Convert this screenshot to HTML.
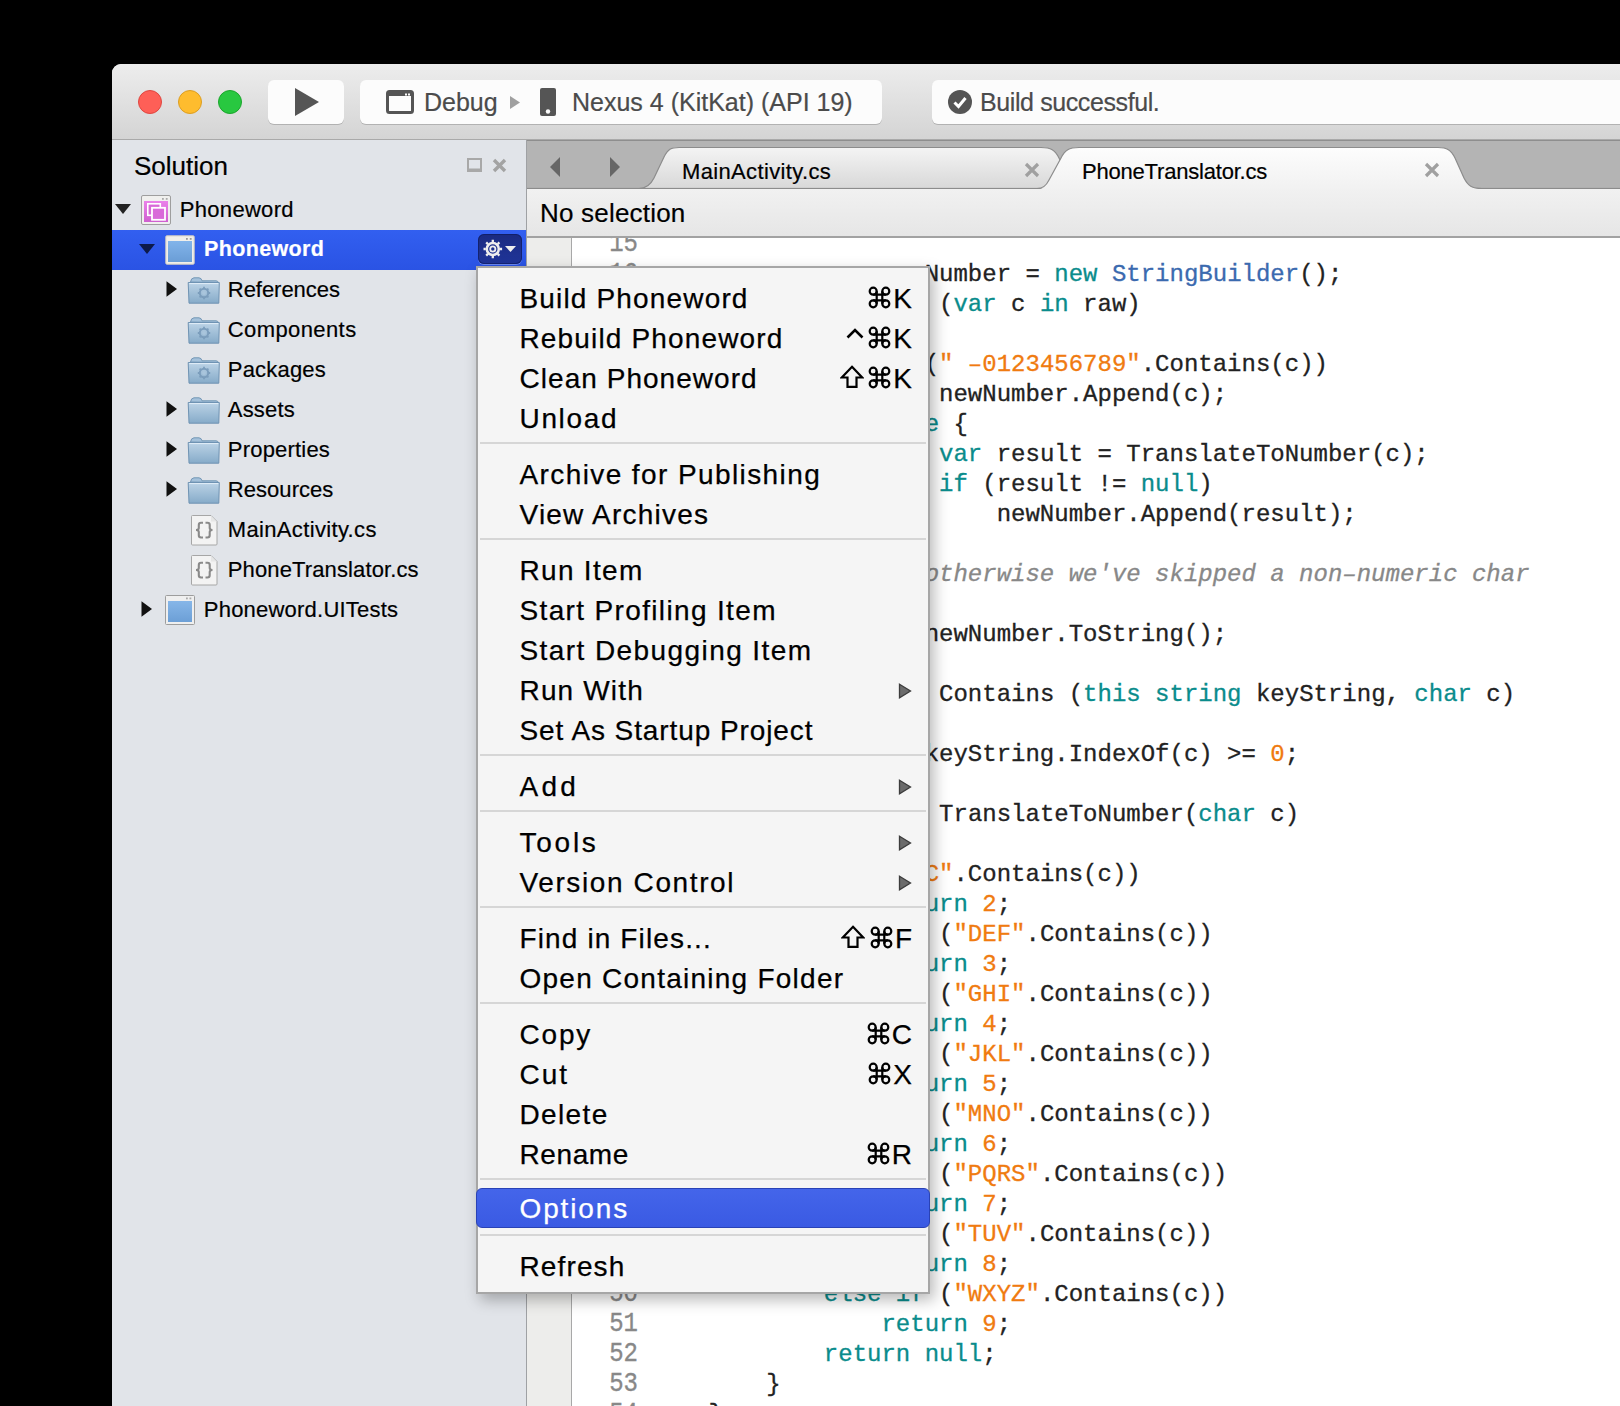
<!DOCTYPE html>
<html><head><meta charset="utf-8">
<style>
html,body{margin:0;padding:0;}
body{width:1620px;height:1406px;overflow:hidden;background:#000;position:relative;font-family:"Liberation Sans",sans-serif;}
.a{position:absolute;}
#win{left:112px;top:64px;width:1508px;height:1342px;background:#e1e4e9;border-top-left-radius:9px;overflow:hidden;}
#toolbar{left:112px;top:64px;width:1508px;height:75px;background:linear-gradient(#ededed,#d4d4d4);border-top-left-radius:9px;border-bottom:1px solid #a9a9a9;}
.tl{width:22px;height:22px;border-radius:50%;top:90px;}
.btn{background:#fcfcfc;border-radius:6px;box-shadow:0 1px 0.5px rgba(0,0,0,0.18);top:80px;height:44px;}
.tbtext{font-size:25px;color:#4b4b4b;top:87px;line-height:30px;white-space:nowrap;-webkit-text-stroke:0.2px currentColor;}
#sidebar{left:112px;top:140px;width:414px;height:1266px;background:#e1e4e9;}
#sbborder{left:526px;top:140px;width:2px;height:1266px;background:#9fa1a4;}
.tree{font-size:21.5px;color:#000;line-height:26px;white-space:nowrap;letter-spacing:0.35px;-webkit-text-stroke:0.2px currentColor;}
#tabbar{left:527px;top:140px;width:1093px;height:48px;background:#b4b4b4;border-top:1px solid #8e8e8e;}
#nosel{left:527px;top:189px;width:1093px;height:47px;background:linear-gradient(#f1f1f1,#e6e6e6);border-bottom:2px solid #a2a2a2;}
#gutter{left:527px;top:238px;width:44px;height:1168px;background:#ededeb;border-right:1px solid #a8a8a8;}
#code{left:572px;top:238px;width:1048px;height:1168px;background:#fff;overflow:hidden;}
#codein{position:absolute;left:0;top:-8.5px;}
.cl{height:30px;line-height:30px;white-space:pre;font-family:"Liberation Mono",monospace;font-size:24px;color:#222;position:relative;-webkit-text-stroke:0.3px currentColor;}
.lnum{position:absolute;left:37px;width:29px;text-align:right;color:#888;transform:scaleY(1.12);transform-origin:0 22px;}
.ctext{position:absolute;left:79px;}
.k{color:#0a8c8c;}
.t{color:#3b6aaf;}
.s{color:#f07b10;}
.n{color:#f07b10;}
.c{color:#888;font-style:italic;}
#menu{left:476px;top:266px;width:450px;background:#f5f5f5;border:2px solid #a6a6a6;box-shadow:4px 6px 14px rgba(0,0,0,0.28);padding:10px 0 6px 0;}
.mi{height:40px;position:relative;font-size:28px;letter-spacing:1px;color:#000;line-height:40px;white-space:nowrap;}
.ml{position:absolute;left:41.5px;top:1px;-webkit-text-stroke:0.25px #000;}
.msc{position:absolute;right:16px;top:1px;letter-spacing:0;-webkit-text-stroke:0.25px #000;}
.cmd{display:inline-block;vertical-align:top;margin-top:7px;margin-right:2px;}
.marr{position:absolute;right:16px;top:13px;width:14px;height:16px;}
.msep{height:16px;position:relative;}
.msep div{position:absolute;left:2px;right:2px;top:4px;height:2px;background:#d6d6d6;}
.mi.sel{color:#fff;}
.mi.sel::before{content:"";position:absolute;left:-2px;right:-2px;top:-2px;height:40px;border-radius:6px;background:linear-gradient(#4465ea,#3a5ae3);border:1.5px solid #2942b6;box-sizing:border-box;}
.mi.sel .ml{z-index:1;top:-1px;-webkit-text-stroke:0.25px #fff;}
</style></head><body>
<div id="win" class="a"></div>
<div id="toolbar" class="a"></div>
<div class="a tl" style="left:138px;background:#fe5f57;border:1px solid #df4640;"></div>
<div class="a tl" style="left:178px;background:#febc2e;border:1px solid #dc9e22;"></div>
<div class="a tl" style="left:218px;background:#28c840;border:1px solid #1ba62c;"></div>
<div class="a btn" style="left:268px;width:76px;"></div>
<svg class="a" style="left:294px;top:87px;" width="26" height="30"><path d="M1 1 L25 15 L1 29 Z" fill="#555"/></svg>
<div class="a btn" style="left:360px;width:522px;"></div>
<svg class="a" style="left:386px;top:90px;" width="28" height="24"><rect x="1.5" y="1.5" width="25" height="21" rx="2" fill="none" stroke="#555" stroke-width="3"/><rect x="3" y="3" width="22" height="3" fill="#555"/><rect x="19" y="3.5" width="2" height="2" fill="#fcfcfc"/><rect x="22" y="3.5" width="2" height="2" fill="#fcfcfc"/></svg>
<div class="a tbtext" style="left:424px;">Debug</div>
<svg class="a" style="left:510px;top:96px;" width="11" height="13"><path d="M0 0 L10 6.5 L0 13 Z" fill="#a0a0a0"/></svg>
<svg class="a" style="left:540px;top:88px;" width="17" height="28"><rect x="0" y="0" width="16" height="28" rx="2" fill="#555"/><circle cx="8" cy="23.5" r="2.2" fill="#fcfcfc"/></svg>
<div class="a tbtext" style="left:572px;">Nexus 4 (KitKat) (API 19)</div>
<div class="a btn" style="left:932px;width:720px;"></div>
<svg class="a" style="left:948px;top:90px;" width="24" height="24"><circle cx="12" cy="12" r="12" fill="#555"/><path d="M6.5 12.5 L10.5 16.5 L17.5 8" fill="none" stroke="#fff" stroke-width="3"/></svg>
<div class="a tbtext" style="left:980px;letter-spacing:-0.4px;">Build successful.</div>

<div id="sidebar" class="a"></div>
<div id="sbborder" class="a"></div>
<div class="a" style="left:134px;top:150px;font-size:26px;color:#000;line-height:32px;-webkit-text-stroke:0.2px #000;">Solution</div>
<svg class="a" style="left:467px;top:158px;" width="15" height="14"><rect x="1" y="1" width="13" height="12" fill="none" stroke="#a8a8a8" stroke-width="2"/><rect x="1" y="10.5" width="13" height="3" fill="#a8a8a8"/></svg>
<svg class="a" style="left:492px;top:158px;" width="15" height="15"><path d="M2 2 L13 13 M13 2 L2 13" stroke="#a3a3a3" stroke-width="3.4"/></svg>

<!-- tree -->
<svg class="a" style="left:115px;top:204px;" width="16" height="10"><path d="M0 0 L16 0 L8 10 Z" fill="#222"/></svg>
<svg class="a" style="left:141px;top:195px;" width="30" height="30"><defs><linearGradient id="pk" x1="0" y1="0" x2="0" y2="1"><stop offset="0" stop-color="#ea82ea"/><stop offset="1" stop-color="#cf5fcf"/></linearGradient></defs><rect x="0.5" y="0.5" width="29" height="29" rx="1.5" fill="#f0f0ee" stroke="#9e9e9e"/><rect x="3" y="6" width="24" height="21" fill="url(#pk)"/><rect x="6.8" y="8.8" width="12.5" height="11.5" fill="#d86ad8" stroke="#fff" stroke-width="1.6"/><rect x="11" y="12.8" width="13" height="12" fill="#d96ad9" stroke="#fff" stroke-width="1.8"/><rect x="21" y="3" width="1.8" height="1.8" fill="#aaa"/><rect x="24.8" y="3" width="1.8" height="1.8" fill="#aaa"/></svg>
<div class="a tree" style="left:179.8px;top:196.5px;font-size:22px;letter-spacing:0.3px">Phoneword</div>

<div class="a" style="left:112px;top:230px;width:414px;height:40px;background:linear-gradient(#325ff0,#2a53e4);"></div>
<svg class="a" style="left:139px;top:244px;" width="16" height="10"><path d="M0 0 L16 0 L8 10 Z" fill="#0d1a4a"/></svg>
<svg class="a" style="left:165px;top:235px;" width="31" height="31"><rect x="0.8" y="0.8" width="28.4" height="28.4" rx="1" fill="#f1efea" stroke="#cfcac0" stroke-width="1"/><rect x="3" y="6" width="24" height="21" fill="url(#pb)"/><rect x="21" y="3" width="1.8" height="1.8" fill="#999"/><rect x="24.8" y="3" width="1.8" height="1.8" fill="#999"/><defs><linearGradient id="pb" x1="0" y1="0" x2="0" y2="1"><stop offset="0" stop-color="#82b4ea"/><stop offset="1" stop-color="#6a9dd6"/></linearGradient></defs></svg>
<div class="a tree" style="left:204px;top:236px;color:#fff;font-weight:bold;">Phoneword</div>
<div class="a" style="left:478px;top:234px;width:44px;height:30px;border-radius:6px;background:linear-gradient(#1a2a80,#20359a);box-shadow:inset 0 0 0 1px rgba(10,20,80,0.5), 0 1px 0 rgba(160,180,255,0.55);"></div>
<svg class="a" style="left:483px;top:238px;" width="36" height="22"><g transform="translate(9.8,11)"><circle r="6" fill="none" stroke="#eee" stroke-width="2.5"/><circle r="2.6" fill="none" stroke="#eee" stroke-width="1.8"/><g stroke="#eee" stroke-width="2.3"><path d="M0 -9.3 V-7 M0 7 V9.3 M-9.3 0 H-7 M7 0 H9.3 M-6.6 -6.6 L-4.9 -4.9 M4.9 4.9 L6.6 6.6 M-6.6 6.6 L-4.9 4.9 M4.9 -4.9 L6.6 -6.6"/></g></g><path d="M22 8 L33 8 L27.5 14 Z" fill="#eee"/></svg>

<svg class="a" style="left:166px;top:281px;" width="12" height="16"><path d="M0.5 0.2 L11 8 L0.5 15.8 Z" fill="#111"/></svg>
<svg class="a" style="left:187px;top:277px;" width="34" height="28"><defs><linearGradient id="fg277" x1="0" y1="0" x2="0" y2="1"><stop offset="0" stop-color="#bcd3e6"/><stop offset="1" stop-color="#86abc9"/></linearGradient></defs><path d="M3.5 5 Q4 1 7 0.8 L12 0.8 Q14.5 1 15 3.8 L29 3.8 Q31 4 31.5 5.5 Z" fill="#a4c1da" stroke="#7497b6" stroke-width="1"/><path d="M1.2 5.5 L32.3 5.5 L31.8 26.2 L2 26.2 Z" fill="url(#fg277)" stroke="#6f93b3" stroke-width="1"/><path d="M2.2 6.6 L31.3 6.6" stroke="#e2eef8" stroke-width="1"/><g transform="translate(17,16)"><circle r="4.2" fill="none" stroke="#7b9dbc" stroke-width="2"/><circle r="2" fill="#a9c5dc"/><g stroke="#7b9dbc" stroke-width="1.8"><path d="M0 -6.2 V-4 M0 4 V6.2 M-6.2 0 H-4 M4 0 H6.2 M-4.4 -4.4 L-2.9 -2.9 M2.9 2.9 L4.4 4.4 M-4.4 4.4 L-2.9 2.9 M2.9 -2.9 L4.4 -4.4"/></g></g></svg>
<div class="a tree" style="left:227.8px;top:276.5px;font-size:22px;letter-spacing:-0.04px">References</div>
<svg class="a" style="left:187px;top:317px;" width="34" height="28"><defs><linearGradient id="fg317" x1="0" y1="0" x2="0" y2="1"><stop offset="0" stop-color="#bcd3e6"/><stop offset="1" stop-color="#86abc9"/></linearGradient></defs><path d="M3.5 5 Q4 1 7 0.8 L12 0.8 Q14.5 1 15 3.8 L29 3.8 Q31 4 31.5 5.5 Z" fill="#a4c1da" stroke="#7497b6" stroke-width="1"/><path d="M1.2 5.5 L32.3 5.5 L31.8 26.2 L2 26.2 Z" fill="url(#fg317)" stroke="#6f93b3" stroke-width="1"/><path d="M2.2 6.6 L31.3 6.6" stroke="#e2eef8" stroke-width="1"/><g transform="translate(17,16)"><circle r="4.2" fill="none" stroke="#7b9dbc" stroke-width="2"/><circle r="2" fill="#a9c5dc"/><g stroke="#7b9dbc" stroke-width="1.8"><path d="M0 -6.2 V-4 M0 4 V6.2 M-6.2 0 H-4 M4 0 H6.2 M-4.4 -4.4 L-2.9 -2.9 M2.9 2.9 L4.4 4.4 M-4.4 4.4 L-2.9 2.9 M2.9 -2.9 L4.4 -4.4"/></g></g></svg>
<div class="a tree" style="left:227.8px;top:316.5px;font-size:22px;letter-spacing:0.40px">Components</div>
<svg class="a" style="left:187px;top:357px;" width="34" height="28"><defs><linearGradient id="fg357" x1="0" y1="0" x2="0" y2="1"><stop offset="0" stop-color="#bcd3e6"/><stop offset="1" stop-color="#86abc9"/></linearGradient></defs><path d="M3.5 5 Q4 1 7 0.8 L12 0.8 Q14.5 1 15 3.8 L29 3.8 Q31 4 31.5 5.5 Z" fill="#a4c1da" stroke="#7497b6" stroke-width="1"/><path d="M1.2 5.5 L32.3 5.5 L31.8 26.2 L2 26.2 Z" fill="url(#fg357)" stroke="#6f93b3" stroke-width="1"/><path d="M2.2 6.6 L31.3 6.6" stroke="#e2eef8" stroke-width="1"/><g transform="translate(17,16)"><circle r="4.2" fill="none" stroke="#7b9dbc" stroke-width="2"/><circle r="2" fill="#a9c5dc"/><g stroke="#7b9dbc" stroke-width="1.8"><path d="M0 -6.2 V-4 M0 4 V6.2 M-6.2 0 H-4 M4 0 H6.2 M-4.4 -4.4 L-2.9 -2.9 M2.9 2.9 L4.4 4.4 M-4.4 4.4 L-2.9 2.9 M2.9 -2.9 L4.4 -4.4"/></g></g></svg>
<div class="a tree" style="left:227.8px;top:356.5px;font-size:22px;letter-spacing:0.19px">Packages</div>
<svg class="a" style="left:166px;top:401px;" width="12" height="16"><path d="M0.5 0.2 L11 8 L0.5 15.8 Z" fill="#111"/></svg>
<svg class="a" style="left:187px;top:397px;" width="34" height="28"><defs><linearGradient id="fg397" x1="0" y1="0" x2="0" y2="1"><stop offset="0" stop-color="#bcd3e6"/><stop offset="1" stop-color="#86abc9"/></linearGradient></defs><path d="M3.5 5 Q4 1 7 0.8 L12 0.8 Q14.5 1 15 3.8 L29 3.8 Q31 4 31.5 5.5 Z" fill="#a4c1da" stroke="#7497b6" stroke-width="1"/><path d="M1.2 5.5 L32.3 5.5 L31.8 26.2 L2 26.2 Z" fill="url(#fg397)" stroke="#6f93b3" stroke-width="1"/><path d="M2.2 6.6 L31.3 6.6" stroke="#e2eef8" stroke-width="1"/></svg>
<div class="a tree" style="left:227.8px;top:396.5px;font-size:22px;letter-spacing:0.18px">Assets</div>
<svg class="a" style="left:166px;top:441px;" width="12" height="16"><path d="M0.5 0.2 L11 8 L0.5 15.8 Z" fill="#111"/></svg>
<svg class="a" style="left:187px;top:437px;" width="34" height="28"><defs><linearGradient id="fg437" x1="0" y1="0" x2="0" y2="1"><stop offset="0" stop-color="#bcd3e6"/><stop offset="1" stop-color="#86abc9"/></linearGradient></defs><path d="M3.5 5 Q4 1 7 0.8 L12 0.8 Q14.5 1 15 3.8 L29 3.8 Q31 4 31.5 5.5 Z" fill="#a4c1da" stroke="#7497b6" stroke-width="1"/><path d="M1.2 5.5 L32.3 5.5 L31.8 26.2 L2 26.2 Z" fill="url(#fg437)" stroke="#6f93b3" stroke-width="1"/><path d="M2.2 6.6 L31.3 6.6" stroke="#e2eef8" stroke-width="1"/></svg>
<div class="a tree" style="left:227.8px;top:436.5px;font-size:22px;letter-spacing:0.20px">Properties</div>
<svg class="a" style="left:166px;top:481px;" width="12" height="16"><path d="M0.5 0.2 L11 8 L0.5 15.8 Z" fill="#111"/></svg>
<svg class="a" style="left:187px;top:477px;" width="34" height="28"><defs><linearGradient id="fg477" x1="0" y1="0" x2="0" y2="1"><stop offset="0" stop-color="#bcd3e6"/><stop offset="1" stop-color="#86abc9"/></linearGradient></defs><path d="M3.5 5 Q4 1 7 0.8 L12 0.8 Q14.5 1 15 3.8 L29 3.8 Q31 4 31.5 5.5 Z" fill="#a4c1da" stroke="#7497b6" stroke-width="1"/><path d="M1.2 5.5 L32.3 5.5 L31.8 26.2 L2 26.2 Z" fill="url(#fg477)" stroke="#6f93b3" stroke-width="1"/><path d="M2.2 6.6 L31.3 6.6" stroke="#e2eef8" stroke-width="1"/></svg>
<div class="a tree" style="left:227.8px;top:476.5px;font-size:22px;letter-spacing:0.05px">Resources</div>
<svg class="a" style="left:191px;top:515px;" width="27" height="31"><path d="M1.5 0.5 L20 0.5 L26 6.5 L26 29 Q26 30 25 30 L1.5 30 Q0.5 30 0.5 29 L0.5 1.5 Q0.5 0.5 1.5 0.5 Z" fill="#f3f3f3" stroke="#a6a6a6" stroke-width="1"/><path d="M20 0.8 L20 6.5 L25.7 6.5 Z" fill="#e6e6e6"/><g fill="none" stroke="#8a8a8a" stroke-width="2.1"><path d="M12 7.8 L10 7.8 Q7.8 7.8 7.8 10 L7.8 13 Q7.8 15 5 15 Q7.8 15 7.8 17 L7.8 20.3 Q7.8 22.5 10 22.5 L12 22.5"/><path d="M14.5 7.8 L16.5 7.8 Q18.7 7.8 18.7 10 L18.7 13 Q18.7 15 21.5 15 Q18.7 15 18.7 17 L18.7 20.3 Q18.7 22.5 16.5 22.5 L14.5 22.5"/></g></svg>
<div class="a tree" style="left:227.8px;top:516.5px;font-size:22px;letter-spacing:0.34px">MainActivity.cs</div>
<svg class="a" style="left:191px;top:555px;" width="27" height="31"><path d="M1.5 0.5 L20 0.5 L26 6.5 L26 29 Q26 30 25 30 L1.5 30 Q0.5 30 0.5 29 L0.5 1.5 Q0.5 0.5 1.5 0.5 Z" fill="#f3f3f3" stroke="#a6a6a6" stroke-width="1"/><path d="M20 0.8 L20 6.5 L25.7 6.5 Z" fill="#e6e6e6"/><g fill="none" stroke="#8a8a8a" stroke-width="2.1"><path d="M12 7.8 L10 7.8 Q7.8 7.8 7.8 10 L7.8 13 Q7.8 15 5 15 Q7.8 15 7.8 17 L7.8 20.3 Q7.8 22.5 10 22.5 L12 22.5"/><path d="M14.5 7.8 L16.5 7.8 Q18.7 7.8 18.7 10 L18.7 13 Q18.7 15 21.5 15 Q18.7 15 18.7 17 L18.7 20.3 Q18.7 22.5 16.5 22.5 L14.5 22.5"/></g></svg>
<div class="a tree" style="left:227.8px;top:556.5px;font-size:22px;letter-spacing:0.12px">PhoneTranslator.cs</div>
<svg class="a" style="left:141px;top:601px;" width="12" height="16"><path d="M0.5 0.2 L11 8 L0.5 15.8 Z" fill="#111"/></svg>
<svg class="a" style="left:165px;top:595px;" width="31" height="31"><defs><linearGradient id="pj595" x1="0" y1="0" x2="0" y2="1"><stop offset="0" stop-color="#86b6e8"/><stop offset="1" stop-color="#6c9fd6"/></linearGradient></defs><rect x="0.5" y="0.5" width="29" height="29" rx="1" fill="#efefef" stroke="#9d9d9d"/><rect x="3" y="6" width="24" height="21" fill="url(#pj595)"/><rect x="21" y="2.5" width="1.8" height="1.8" fill="#aaa"/><rect x="24.5" y="2.5" width="1.8" height="1.8" fill="#aaa"/></svg>
<div class="a tree" style="left:203.8px;top:596.5px;font-size:22px;letter-spacing:0.22px">Phoneword.UITests</div>

<!-- editor -->
<div id="tabbar" class="a"></div>
<svg class="a" style="left:548px;top:156px;" width="14" height="22"><path d="M12 1 L12 21 L2 11 Z" fill="#666"/></svg>
<svg class="a" style="left:608px;top:156px;" width="14" height="22"><path d="M2 1 L2 21 L12 11 Z" fill="#666"/></svg>
<svg class="a" style="left:527px;top:140px;" width="1093" height="50">
 <defs>
  <linearGradient id="ti" x1="0" y1="0" x2="0" y2="1"><stop offset="0" stop-color="#f4f4f4"/><stop offset="1" stop-color="#d8d8d8"/></linearGradient>
  <linearGradient id="ta" x1="0" y1="0" x2="0" y2="1"><stop offset="0" stop-color="#fdfdfd"/><stop offset="1" stop-color="#f1f1f1"/></linearGradient>
 </defs>
 <path d="M112 48.5 C 120 48.5, 124 44, 127 38 L 137 17 C 141 9, 144 7.5, 152 7.5 L 514 7.5 C 524 7.5, 528 10, 532 18 L 545 44 L 545 48.5 Z" fill="url(#ti)" stroke="#8c8c8c" stroke-width="1.2"/>
 <rect x="0" y="47.9" width="1093" height="1.2" fill="#8c8c8c"/>
 <path d="M510 49.5 C 516 49.5, 519 46, 522 40 L 534 18 C 538 10, 542 7.5, 552 7.5 L 911 7.5 C 920 7.5, 924 10, 928 18 L 937 38 C 941 46, 945 48.5, 955 48.5 L 1093 48.5 L 1093 50 L 510 50 Z" fill="url(#ta)"/>
 <path d="M510 48.5 C 516 48.5, 519 46, 522 40 L 534 18 C 538 10, 542 7.5, 552 7.5 L 911 7.5 C 920 7.5, 924 10, 928 18 L 937 38 C 941 46, 945 48.5, 955 48.5 L 1093 48.5" fill="none" stroke="#8c8c8c" stroke-width="1.2"/>
 <rect x="518" y="49" width="420" height="1" fill="#f1f1f1"/>
</svg>
<div class="a tree" style="left:682px;top:159px;font-size:22px;">MainActivity.cs</div>
<svg class="a" style="left:1024px;top:162px;" width="16" height="16"><path d="M2 2 L14 14 M14 2 L2 14" stroke="#a0a0a0" stroke-width="3.2"/></svg>
<div class="a tree" style="left:1082px;top:159px;font-size:22px;letter-spacing:-0.2px;">PhoneTranslator.cs</div>
<svg class="a" style="left:1424px;top:162px;" width="16" height="16"><path d="M2 2 L14 14 M14 2 L2 14" stroke="#a0a0a0" stroke-width="3.2"/></svg>

<div id="nosel" class="a"></div>
<div class="a" style="left:540px;top:197px;font-size:26px;line-height:32px;color:#000;letter-spacing:0.2px;-webkit-text-stroke:0.2px #000;">No selection</div>
<div id="gutter" class="a"></div>
<div id="code" class="a"><div id="codein">
<div class="cl"><span class="lnum">15</span><span class="ctext"></span></div>
<div class="cl"><span class="lnum">16</span><span class="ctext">            <span class="k">var</span> newNumber = <span class="k">new</span> <span class="t">StringBuilder</span>();</span></div>
<div class="cl"><span class="lnum">17</span><span class="ctext">            <span class="k">foreach</span> (<span class="k">var</span> c <span class="k">in</span> raw)</span></div>
<div class="cl"><span class="lnum">18</span><span class="ctext">            {</span></div>
<div class="cl"><span class="lnum">19</span><span class="ctext">                <span class="k">if</span> (<span class="s">&quot; –0123456789&quot;</span>.Contains(c))</span></div>
<div class="cl"><span class="lnum">20</span><span class="ctext">                    newNumber.Append(c);</span></div>
<div class="cl"><span class="lnum">21</span><span class="ctext">                <span class="k">else</span> {</span></div>
<div class="cl"><span class="lnum">22</span><span class="ctext">                    <span class="k">var</span> result = TranslateToNumber(c);</span></div>
<div class="cl"><span class="lnum">23</span><span class="ctext">                    <span class="k">if</span> (result != <span class="k">null</span>)</span></div>
<div class="cl"><span class="lnum">24</span><span class="ctext">                        newNumber.Append(result);</span></div>
<div class="cl"><span class="lnum">25</span><span class="ctext">                }</span></div>
<div class="cl"><span class="lnum">26</span><span class="ctext">                <span class="c">// otherwise we&#x27;ve skipped a non–numeric char</span></span></div>
<div class="cl"><span class="lnum">27</span><span class="ctext">            }</span></div>
<div class="cl"><span class="lnum">28</span><span class="ctext">            <span class="k">return</span> newNumber.ToString();</span></div>
<div class="cl"><span class="lnum">29</span><span class="ctext">        }</span></div>
<div class="cl"><span class="lnum">30</span><span class="ctext">        <span class="k">static</span> <span class="k">bool</span> Contains (<span class="k">this</span> <span class="k">string</span> keyString, <span class="k">char</span> c)</span></div>
<div class="cl"><span class="lnum">31</span><span class="ctext">        {</span></div>
<div class="cl"><span class="lnum">32</span><span class="ctext">            <span class="k">return</span> keyString.IndexOf(c) &gt;= <span class="n">0</span>;</span></div>
<div class="cl"><span class="lnum">33</span><span class="ctext">        }</span></div>
<div class="cl"><span class="lnum">34</span><span class="ctext">        <span class="k">static</span> <span class="k">int</span>? TranslateToNumber(<span class="k">char</span> c)</span></div>
<div class="cl"><span class="lnum">35</span><span class="ctext">        {</span></div>
<div class="cl"><span class="lnum">36</span><span class="ctext">            <span class="k">if</span> (<span class="s">&quot;ABC&quot;</span>.Contains(c))</span></div>
<div class="cl"><span class="lnum">37</span><span class="ctext">                <span class="k">return</span> <span class="n">2</span>;</span></div>
<div class="cl"><span class="lnum">38</span><span class="ctext">            <span class="k">else if</span> (<span class="s">&quot;DEF&quot;</span>.Contains(c))</span></div>
<div class="cl"><span class="lnum">39</span><span class="ctext">                <span class="k">return</span> <span class="n">3</span>;</span></div>
<div class="cl"><span class="lnum">40</span><span class="ctext">            <span class="k">else if</span> (<span class="s">&quot;GHI&quot;</span>.Contains(c))</span></div>
<div class="cl"><span class="lnum">41</span><span class="ctext">                <span class="k">return</span> <span class="n">4</span>;</span></div>
<div class="cl"><span class="lnum">42</span><span class="ctext">            <span class="k">else if</span> (<span class="s">&quot;JKL&quot;</span>.Contains(c))</span></div>
<div class="cl"><span class="lnum">43</span><span class="ctext">                <span class="k">return</span> <span class="n">5</span>;</span></div>
<div class="cl"><span class="lnum">44</span><span class="ctext">            <span class="k">else if</span> (<span class="s">&quot;MNO&quot;</span>.Contains(c))</span></div>
<div class="cl"><span class="lnum">45</span><span class="ctext">                <span class="k">return</span> <span class="n">6</span>;</span></div>
<div class="cl"><span class="lnum">46</span><span class="ctext">            <span class="k">else if</span> (<span class="s">&quot;PQRS&quot;</span>.Contains(c))</span></div>
<div class="cl"><span class="lnum">47</span><span class="ctext">                <span class="k">return</span> <span class="n">7</span>;</span></div>
<div class="cl"><span class="lnum">48</span><span class="ctext">            <span class="k">else if</span> (<span class="s">&quot;TUV&quot;</span>.Contains(c))</span></div>
<div class="cl"><span class="lnum">49</span><span class="ctext">                <span class="k">return</span> <span class="n">8</span>;</span></div>
<div class="cl"><span class="lnum">50</span><span class="ctext">            <span class="k">else if</span> (<span class="s">&quot;WXYZ&quot;</span>.Contains(c))</span></div>
<div class="cl"><span class="lnum">51</span><span class="ctext">                <span class="k">return</span> <span class="n">9</span>;</span></div>
<div class="cl"><span class="lnum">52</span><span class="ctext">            <span class="k">return</span> <span class="k">null</span>;</span></div>
<div class="cl"><span class="lnum">53</span><span class="ctext">        }</span></div>
<div class="cl"><span class="lnum">54</span><span class="ctext">    }</span></div>
<div class="cl"><span class="lnum">55</span><span class="ctext">}</span></div>
</div></div>

<div id="menu" class="a">
<div class="mi"><span class="ml" style="letter-spacing:1.16px">Build Phoneword</span><span class="msc"><svg class="cmd" width="23" height="23" viewBox="0 0 23 23"><g fill="none" stroke="#000" stroke-width="2.2"><circle cx="5.2" cy="5.2" r="3.5"/><circle cx="17.8" cy="5.2" r="3.5"/><circle cx="5.2" cy="17.8" r="3.5"/><circle cx="17.8" cy="17.8" r="3.5"/><path d="M8.7 5.2 V17.8 M14.3 5.2 V17.8 M5.2 8.7 H17.8 M5.2 14.3 H17.8"/></g></svg>K</span></div>
<div class="mi"><span class="ml" style="letter-spacing:1.15px">Rebuild Phoneword</span><span class="msc"><svg class="a" style="left:-22.5px;top:7.5px;" width="18" height="12"><path d="M1.5 10.5 L9 3 L16.5 10.5" fill="none" stroke="#000" stroke-width="2.6"/></svg><svg class="cmd" width="23" height="23" viewBox="0 0 23 23"><g fill="none" stroke="#000" stroke-width="2.2"><circle cx="5.2" cy="5.2" r="3.5"/><circle cx="17.8" cy="5.2" r="3.5"/><circle cx="5.2" cy="17.8" r="3.5"/><circle cx="17.8" cy="17.8" r="3.5"/><path d="M8.7 5.2 V17.8 M14.3 5.2 V17.8 M5.2 8.7 H17.8 M5.2 14.3 H17.8"/></g></svg>K</span></div>
<div class="mi"><span class="ml" style="letter-spacing:1.04px">Clean Phoneword</span><span class="msc"><svg class="a" style="left:-28.5px;top:6px;" width="24" height="24"><path d="M12 1.8 L22.2 12.5 L16.5 12.5 L16.5 21.8 L7.5 21.8 L7.5 12.5 L1.8 12.5 Z" fill="none" stroke="#000" stroke-width="2.2" stroke-linejoin="miter"/></svg><svg class="cmd" width="23" height="23" viewBox="0 0 23 23"><g fill="none" stroke="#000" stroke-width="2.2"><circle cx="5.2" cy="5.2" r="3.5"/><circle cx="17.8" cy="5.2" r="3.5"/><circle cx="5.2" cy="17.8" r="3.5"/><circle cx="17.8" cy="17.8" r="3.5"/><path d="M8.7 5.2 V17.8 M14.3 5.2 V17.8 M5.2 8.7 H17.8 M5.2 14.3 H17.8"/></g></svg>K</span></div>
<div class="mi"><span class="ml" style="letter-spacing:1.66px">Unload</span></div>
<div class="msep"><div></div></div>
<div class="mi"><span class="ml" style="letter-spacing:1.40px">Archive for Publishing</span></div>
<div class="mi"><span class="ml" style="letter-spacing:1.22px">View Archives</span></div>
<div class="msep"><div></div></div>
<div class="mi"><span class="ml" style="letter-spacing:1.30px">Run Item</span></div>
<div class="mi"><span class="ml" style="letter-spacing:1.35px">Start Profiling Item</span></div>
<div class="mi"><span class="ml" style="letter-spacing:1.42px">Start Debugging Item</span></div>
<div class="mi"><span class="ml" style="letter-spacing:1.16px">Run With</span><svg class="marr" width="14" height="16"><path d="M1.5 1.2 L12.5 8 L1.5 14.8 Z" fill="#6b6b6b" stroke="#3c3c3c" stroke-width="1.3" stroke-linejoin="miter"/></svg></div>
<div class="mi"><span class="ml" style="letter-spacing:0.91px">Set As Startup Project</span></div>
<div class="msep"><div></div></div>
<div class="mi"><span class="ml" style="letter-spacing:3.30px">Add</span><svg class="marr" width="14" height="16"><path d="M1.5 1.2 L12.5 8 L1.5 14.8 Z" fill="#6b6b6b" stroke="#3c3c3c" stroke-width="1.3" stroke-linejoin="miter"/></svg></div>
<div class="msep"><div></div></div>
<div class="mi"><span class="ml" style="letter-spacing:2.75px">Tools</span><svg class="marr" width="14" height="16"><path d="M1.5 1.2 L12.5 8 L1.5 14.8 Z" fill="#6b6b6b" stroke="#3c3c3c" stroke-width="1.3" stroke-linejoin="miter"/></svg></div>
<div class="mi"><span class="ml" style="letter-spacing:1.61px">Version Control</span><svg class="marr" width="14" height="16"><path d="M1.5 1.2 L12.5 8 L1.5 14.8 Z" fill="#6b6b6b" stroke="#3c3c3c" stroke-width="1.3" stroke-linejoin="miter"/></svg></div>
<div class="msep"><div></div></div>
<div class="mi"><span class="ml" style="letter-spacing:1.13px">Find in Files...</span><span class="msc"><svg class="a" style="left:-28.5px;top:6px;" width="24" height="24"><path d="M12 1.8 L22.2 12.5 L16.5 12.5 L16.5 21.8 L7.5 21.8 L7.5 12.5 L1.8 12.5 Z" fill="none" stroke="#000" stroke-width="2.2" stroke-linejoin="miter"/></svg><svg class="cmd" width="23" height="23" viewBox="0 0 23 23"><g fill="none" stroke="#000" stroke-width="2.2"><circle cx="5.2" cy="5.2" r="3.5"/><circle cx="17.8" cy="5.2" r="3.5"/><circle cx="5.2" cy="17.8" r="3.5"/><circle cx="17.8" cy="17.8" r="3.5"/><path d="M8.7 5.2 V17.8 M14.3 5.2 V17.8 M5.2 8.7 H17.8 M5.2 14.3 H17.8"/></g></svg>F</span></div>
<div class="mi"><span class="ml" style="letter-spacing:1.25px">Open Containing Folder</span></div>
<div class="msep"><div></div></div>
<div class="mi"><span class="ml" style="letter-spacing:1.80px">Copy</span><span class="msc"><svg class="cmd" width="23" height="23" viewBox="0 0 23 23"><g fill="none" stroke="#000" stroke-width="2.2"><circle cx="5.2" cy="5.2" r="3.5"/><circle cx="17.8" cy="5.2" r="3.5"/><circle cx="5.2" cy="17.8" r="3.5"/><circle cx="17.8" cy="17.8" r="3.5"/><path d="M8.7 5.2 V17.8 M14.3 5.2 V17.8 M5.2 8.7 H17.8 M5.2 14.3 H17.8"/></g></svg>C</span></div>
<div class="mi"><span class="ml" style="letter-spacing:1.95px">Cut</span><span class="msc"><svg class="cmd" width="23" height="23" viewBox="0 0 23 23"><g fill="none" stroke="#000" stroke-width="2.2"><circle cx="5.2" cy="5.2" r="3.5"/><circle cx="17.8" cy="5.2" r="3.5"/><circle cx="5.2" cy="17.8" r="3.5"/><circle cx="17.8" cy="17.8" r="3.5"/><path d="M8.7 5.2 V17.8 M14.3 5.2 V17.8 M5.2 8.7 H17.8 M5.2 14.3 H17.8"/></g></svg>X</span></div>
<div class="mi"><span class="ml" style="letter-spacing:1.36px">Delete</span></div>
<div class="mi"><span class="ml" style="letter-spacing:0.60px">Rename</span><span class="msc"><svg class="cmd" width="23" height="23" viewBox="0 0 23 23"><g fill="none" stroke="#000" stroke-width="2.2"><circle cx="5.2" cy="5.2" r="3.5"/><circle cx="17.8" cy="5.2" r="3.5"/><circle cx="5.2" cy="17.8" r="3.5"/><circle cx="17.8" cy="17.8" r="3.5"/><path d="M8.7 5.2 V17.8 M14.3 5.2 V17.8 M5.2 8.7 H17.8 M5.2 14.3 H17.8"/></g></svg>R</span></div>
<div class="msep"><div></div></div>
<div class="mi sel"><span class="ml" style="letter-spacing:1.88px">Options</span></div>
<div class="msep"><div></div></div>
<div class="mi"><span class="ml" style="letter-spacing:1.12px">Refresh</span></div>
</div>
</body></html>
